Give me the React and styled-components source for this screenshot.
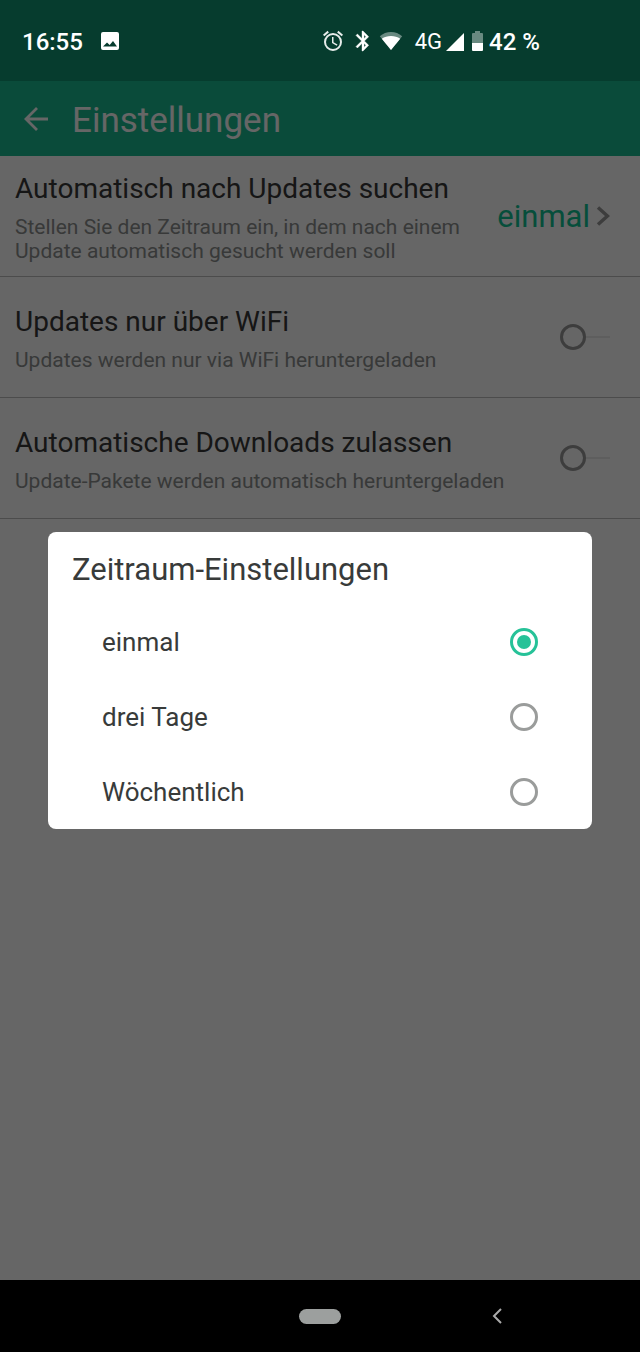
import React, { useState } from 'react'
import styled, { createGlobalStyle } from 'styled-components'

const GlobalStyle = createGlobalStyle`
  *, *::before, *::after {
    box-sizing: border-box;
  }

  body {
    margin: 0;
    font-family: Roboto, "Noto Sans", sans-serif;
    background: #000;
  }

  button {
    padding: 0;
    border: none;
    background: none;
    font: inherit;
    cursor: pointer;
  }

  svg {
    display: block;
  }
`

const Screen = styled.div`
  display: flex;
  flex-direction: column;
  min-height: 100vh;
`

const StatusBar = styled.div`
  display: flex;
  justify-content: space-between;
  height: 81px;
  padding: 0 100px 0 22px;
  background: #063c2e;
  color: #fff;
  font-size: 24px;
  font-weight: 500;
`

const StatusGroup = styled.div`
  display: flex;
  align-items: center;
  gap: ${({gap}) => gap}px;
`

const StatusText = styled.span`
  padding-top: 2px;
`

const Network = styled(StatusText)`
  margin: 0 4px 0 12px;
  font-size: 22px;
  font-weight: 400;
`

const Battery = styled.span`
  margin: 0 6px 0 8px;
`

const Window = styled.div`
  position: relative;
  flex: 1;
  display: flex;
  flex-direction: column;
  background: #fff;
`

const AppBar = styled.header`
  display: flex;
  align-items: center;
  gap: 24px;
  height: 75px;
  padding: 0 24px;
  background: #19bc91;
  color: #fff;
`

const BackButton = styled.button`
  color: inherit;
`

const AppTitle = styled.h1`
  margin: 0;
  padding-top: 4px;
  font-size: 35px;
  font-weight: 400;
`

const Row = styled.div`
  display: flex;
  align-items: center;
  justify-content: space-between;
  min-height: 121px;
  padding: 0 30px 0 15px;
  border-bottom: 1px solid #bebebe;
`

const RowText = styled.label`
  max-width: ${({narrow}) => narrow ? '460px' : 'none'};
  padding-top: 2px;
`

const RowTitle = styled.div`
  margin-bottom: 8px;
  color: #383838;
  font-size: 28px;
  line-height: 36px;
`

const RowHint = styled.div`
  color: #8c8f8e;
  font-size: 21px;
  line-height: 24px;
`

const ValueButton = styled.button`
  display: flex;
  align-items: center;
  gap: 6px;
  color: #0fc294;
  font-size: 31px;
`

const Toggle = styled.input`
  appearance: none;
  display: flex;
  align-items: center;
  width: 50px;
  height: 26px;
  margin: 0;
  cursor: pointer;

  &::before {
    content: '';
    width: 26px;
    height: 26px;
    border: 3px solid #999;
    border-radius: 50%;
  }

  &::after {
    content: '';
    flex: 1;
    height: 2px;
    background: #ececec;
  }

  &:checked {
    flex-direction: row-reverse;
  }

  &:checked::before {
    border-color: #26c298;
  }
`

const Scrim = styled.div`
  position: absolute;
  inset: 0;
  display: flex;
  align-items: center;
  padding: 0 48px;
  background: rgba(0, 0, 0, 0.6);
`

const Dialog = styled.fieldset`
  flex: 1;
  min-width: 0;
  margin: 0;
  padding: 0;
  border: none;
  border-radius: 8px;
  background: #fff;
  color: #383b3a;
`

const DialogTitle = styled.h2`
  margin: 0;
  padding: 4px 24px 0;
  font-size: 31px;
  font-weight: 400;
  line-height: 68px;
`

const Option = styled.label`
  display: flex;
  align-items: center;
  justify-content: space-between;
  height: 75px;
  padding: 0 54px;
  font-size: 26px;
  cursor: pointer;
`

const Radio = styled.input`
  appearance: none;
  display: grid;
  place-items: center;
  width: 28px;
  height: 28px;
  margin: 0;
  border: 3px solid #9a9c9b;
  border-radius: 50%;

  &:checked {
    border-color: #26c298;
  }

  &:checked::before {
    content: '';
    width: 14px;
    height: 14px;
    border-radius: 50%;
    background: #26c298;
  }
`

const NavBar = styled.nav`
  display: grid;
  grid-template-columns: 1fr auto 1fr;
  align-items: center;
  height: 72px;
  background: #000;
`

const HomePill = styled.button`
  grid-column: 2;
  width: 42px;
  height: 15px;
  border-radius: 8px;
  background: #9c9f9e;
`

const NavBack = styled.button`
  justify-self: center;
  padding-left: 12px;
  color: #aaa;
`

const PictureIcon = () => (
  <svg width="18" height="18" viewBox="0 0 18 18" fill="#fff">
    <path fillRule="evenodd" d="M2 0h14a2 2 0 0 1 2 2v14a2 2 0 0 1-2 2H2a2 2 0 0 1-2-2V2a2 2 0 0 1 2-2zM2 14.500h14l-4-5.500-3.300 4-2.700-2.500z" />
  </svg>
)

const AlarmIcon = () => (
  <svg width="24" height="24" viewBox="0 0 24 24" fill="#e6ecea">
    <path d="M22 5.72l-4.6-3.86-1.29 1.53 4.6 3.86L22 5.72zM7.88 3.39L6.6 1.86 2 5.71l1.29 1.53 4.59-3.85zM12.5 8H11v6l4.75 2.85.75-1.23-4-2.37V8zM12 4a9 9 0 1 0 0 18 9 9 0 0 0 0-18zm0 16a7 7 0 1 1 0-14 7 7 0 0 1 0 14z" />
  </svg>
)

const BluetoothIcon = () => (
  <svg width="14" height="24" viewBox="4 0 14 24" fill="#fff" stroke="#fff" strokeWidth="0.4">
    <path d="M17.71 7.71L12 2h-1v7.59L6.41 5 5 6.41 10.59 12 5 17.59 6.41 19 11 14.41V22h1l5.71-5.71-4.3-4.29 4.3-4.29zM13 5.83l1.88 1.88L13 9.59V5.83zm1.88 10.46L13 18.17v-3.76l1.88 1.88z" />
  </svg>
)

const WifiIcon = () => (
  <svg width="24" height="20" viewBox="0 0 24 20" fill="#fff">
    <path opacity="0.4" d="M12 19L.8 5.2C4 2.6 7.8 1 12 1s8 1.6 11.2 4.2z" />
    <path d="M12 19L2.800 7.700C5.400 6 8.500 5 12 5s6.600 1 9.200 2.700z" />
  </svg>
)

const SignalIcon = () => (
  <svg width="18" height="20" viewBox="0 0 18 20" fill="#fff">
    <path d="M0 20L18 2v18z" />
  </svg>
)

const BatteryIcon = () => (
  <svg width="11" height="20" viewBox="0 0 11 20" fill="#fff">
    <path opacity="0.4" d="M0 12V3a1 1 0 0 1 1-1h2V0h5v2h2a1 1 0 0 1 1 1v9z" />
    <path d="M0 12h11v7a1 1 0 0 1-1 1H1a1 1 0 0 1-1-1z" />
  </svg>
)

const BackArrow = () => (
  <svg width="24" height="24" viewBox="0 0 24 24" fill="none" stroke="currentColor" strokeWidth="2.8">
    <path d="M24 12H2M13 1L2 12l11 11" />
  </svg>
)

const Chevron = () => (
  <svg width="14" height="20" viewBox="0 0 14 20" fill="none" stroke="#999" strokeWidth="3.5">
    <path d="M2 1.5l9.5 8.5L2 18.5" />
  </svg>
)

const NavChevron = () => (
  <svg width="10" height="16" viewBox="0 0 10 16" fill="none" stroke="currentColor" strokeWidth="2">
    <path d="M9 1L2 8l7 7" />
  </svg>
)

const periods = ['einmal', 'drei Tage', 'Wöchentlich']

const toggles = [
  {id: 'wifi', title: 'Updates nur über WiFi', hint: 'Updates werden nur via WiFi heruntergeladen'},
  {id: 'auto', title: 'Automatische Downloads zulassen', hint: 'Update-Pakete werden automatisch heruntergeladen'},
]

export default function App() {

  const [period, setPeriod] = useState('einmal')
  const [open, setOpen] = useState(true)

  return (
    <Screen>
      <GlobalStyle />

      <StatusBar>
        <StatusGroup gap={18}>
          <StatusText>16:55</StatusText>
          <PictureIcon />
        </StatusGroup>
        <StatusGroup gap={0}>
          <StatusGroup gap={10}>
            <AlarmIcon />
            <BluetoothIcon />
            <WifiIcon />
          </StatusGroup>
          <Network>4G</Network>
          <SignalIcon />
          <Battery><BatteryIcon /></Battery>
          <StatusText>42 %</StatusText>
        </StatusGroup>
      </StatusBar>

      <Window>
        <AppBar>
          <BackButton aria-label="Zurück"><BackArrow /></BackButton>
          <AppTitle>Einstellungen</AppTitle>
        </AppBar>

        <Row>
          <RowText narrow htmlFor="period">
            <RowTitle>Automatisch nach Updates suchen</RowTitle>
            <RowHint>Stellen Sie den Zeitraum ein, in dem nach einem Update automatisch gesucht werden soll</RowHint>
          </RowText>
          <ValueButton id="period" onClick={() => setOpen(true)}>
            {period}
            <Chevron />
          </ValueButton>
        </Row>

        {toggles.map(({id, title, hint}) => (
          <Row key={id}>
            <RowText htmlFor={id}>
              <RowTitle>{title}</RowTitle>
              <RowHint>{hint}</RowHint>
            </RowText>
            <Toggle type="checkbox" id={id} />
          </Row>
        ))}

        {open && <Scrim onClick={() => setOpen(false)}>
          <Dialog role="dialog" aria-labelledby="dialog-title" onClick={e => e.stopPropagation()}>
            <DialogTitle id="dialog-title">Zeitraum-Einstellungen</DialogTitle>
            {periods.map(item => (
              <Option key={item}>
                {item}
                <Radio type="radio" name="period" checked={item === period} onChange={() => setPeriod(item)} />
              </Option>
            ))}
          </Dialog>
        </Scrim>}
      </Window>

      <NavBar>
        <HomePill aria-label="Startseite" />
        <NavBack aria-label="Zurück"><NavChevron /></NavBack>
      </NavBar>
    </Screen>
  )
}
